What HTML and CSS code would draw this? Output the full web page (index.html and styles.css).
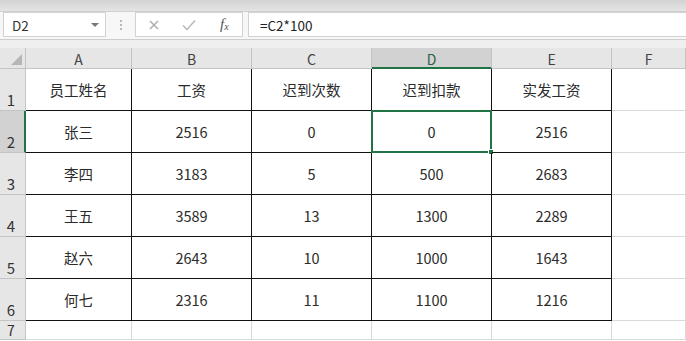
FILE: index.html
```html
<!DOCTYPE html>
<html lang="zh-CN">
<head>
<meta charset="utf-8">
<title>Sheet</title>
<link rel="stylesheet" href="styles.css">
</head>
<body>
<div class="topband"></div>
<div class="fbar">
  <div class="namebox"><span class="nb-text">D2</span><span class="nb-arrow"></span></div>
  <div class="dots"><i></i><i></i><i></i></div>
  <div class="btnbox">
    <svg class="ico" width="14" height="14" viewBox="0 0 14 14"><path d="M3 3 L11 11 M11 3 L3 11" stroke="#a9a9a9" stroke-width="1.4" fill="none"/></svg>
    <svg class="ico" width="16" height="14" viewBox="0 0 16 14"><path d="M2 7.5 L6 11.5 L14 2.5" stroke="#b5b5b5" stroke-width="1.4" fill="none"/></svg>
    <span class="fx">f<sub>x</sub></span>
  </div>
  <div class="finput">=C2*100</div>
</div>
<div class="gap"></div>
<div class="sheet">
  <div class="corner"><span class="tri"></span></div>
  <div class="ch">A</div><div class="ch">B</div><div class="ch">C</div><div class="ch sel">D</div><div class="ch">E</div><div class="ch">F</div>

  <div class="rh">1</div>
  <div class="c b">员工姓名</div><div class="c b">工资</div><div class="c b">迟到次数</div><div class="c b">迟到扣款</div><div class="c b">实发工资</div><div class="c"></div>

  <div class="rh sel">2</div>
  <div class="c b">张三</div><div class="c b">2516</div><div class="c b">0</div><div class="c b active">0<span class="selbox"><span class="handle"></span></span></div><div class="c b">2516</div><div class="c"></div>

  <div class="rh">3</div>
  <div class="c b">李四</div><div class="c b">3183</div><div class="c b">5</div><div class="c b">500</div><div class="c b">2683</div><div class="c"></div>

  <div class="rh">4</div>
  <div class="c b">王五</div><div class="c b">3589</div><div class="c b">13</div><div class="c b">1300</div><div class="c b">2289</div><div class="c"></div>

  <div class="rh">5</div>
  <div class="c b">赵六</div><div class="c b">2643</div><div class="c b">10</div><div class="c b">1000</div><div class="c b">1643</div><div class="c"></div>

  <div class="rh">6</div>
  <div class="c b">何七</div><div class="c b">2316</div><div class="c b">11</div><div class="c b">1100</div><div class="c b">1216</div><div class="c"></div>

  <div class="rh r7">7</div>
  <div class="c"></div><div class="c"></div><div class="c"></div><div class="c"></div><div class="c"></div><div class="c"></div>
</div>
</body>
</html>
```
FILE: styles.css
```css
* { box-sizing: border-box; }
html, body { margin: 0; padding: 0; }
body {
  width: 686px;
  height: 341px;
  overflow: hidden;
  background: #ffffff;
  font-family: "Noto Sans CJK SC", "Noto Sans", sans-serif;
  color: #2b2b2b;
}
.topband {
  height: 12px;
  background: linear-gradient(#d3d3d3, #e4e4e4);
  border-bottom: 1px solid #cfcfcf;
}
.fbar {
  height: 28px;
  background: #f7f7f7;
  border-bottom: 1px solid #cdcdcd;
  display: flex;
  align-items: flex-start;
  padding-left: 3px;
}
.namebox {
  width: 103px;
  height: 25px;
  background: #fff;
  border: 1px solid #d2d2d2;
  display: flex;
  align-items: center;
  justify-content: space-between;
  padding: 0 6px 0 8px;
  font-size: 13.5px;
  color: #333;
}
.nb-arrow {
  width: 0; height: 0;
  border-left: 4px solid transparent;
  border-right: 4px solid transparent;
  border-top: 4px solid #777;
}
.dots {
  width: 29px;
  height: 25px;
  display: flex;
  flex-direction: column;
  align-items: center;
  justify-content: center;
  gap: 2px;
}
.dots i { display: block; width: 2px; height: 2px; background: #b8b8b8; }
.btnbox {
  width: 108px;
  height: 25px;
  background: #fff;
  border: 1px solid #d2d2d2;
  display: flex;
  align-items: center;
  padding-left: 11px;
  gap: 20px;
}
.ico { display: block; }
.fx {
  font-family: "Liberation Serif", serif;
  font-style: italic;
  font-size: 15px;
  color: #555;
  margin-left: 3px;
}
.fx sub { font-size: 10px; vertical-align: -1px; }
.finput {
  flex: 1;
  height: 25px;
  margin-left: 5px;
  background: #fff;
  border: 1px solid #d2d2d2;
  border-right: none;
  display: flex;
  align-items: center;
  padding-left: 11px;
  font-size: 13.5px;
  color: #222;
}
.gap { height: 8px; background: #efefef; }
.sheet {
  display: grid;
  grid-template-columns: 26px 106px 120px 120px 120px 120px 74px;
  grid-template-rows: 21px repeat(6, 42px) 19px;
}
.corner, .ch, .rh {
  background: #e6e6e6;
  border-right: 1px solid #c4c4c4;
  border-bottom: 1px solid #c4c4c4;
}
.corner { position: relative; }
.tri {
  position: absolute;
  right: 3px;
  bottom: 3px;
  width: 0; height: 0;
  border-left: 11px solid transparent;
  border-bottom: 11px solid #b6b6b6;
}
.ch {
  display: flex;
  align-items: center;
  justify-content: center;
  font-size: 14px;
  color: #444;
  padding-top: 1px;
}
.ch.sel {
  background: #d2d2d2;
  border-bottom: 2px solid #217346;
  color: #2f5f44;
  padding-top: 2px;
}
.rh {
  display: flex;
  align-items: flex-end;
  justify-content: center;
  padding-right: 3px;
  font-size: 15px;
  line-height: 20px;
  color: #333;
}
.rh.sel {
  background: #d2d2d2;
  border-right: 2px solid #217346;
  padding-right: 2px;
}
.rh.r7 { line-height: 17px; font-size: 14px; }
.c {
  border-right: 1px solid #d9d9d9;
  border-bottom: 1px solid #d9d9d9;
  display: flex;
  align-items: center;
  justify-content: center;
  font-size: 14.5px;
  color: #2b2b2b;
  position: relative;
}
.c.b {
  border-right: 1px solid #111;
  border-bottom: 1px solid #111;
}
.selbox {
  position: absolute;
  left: -1px;
  top: -1px;
  right: -1px;
  bottom: -1px;
  border: 2px solid #217346;
}
.handle {
  position: absolute;
  right: -4px;
  bottom: -4px;
  width: 6px;
  height: 6px;
  background: #217346;
  border: 1px solid #fff;
}
```
